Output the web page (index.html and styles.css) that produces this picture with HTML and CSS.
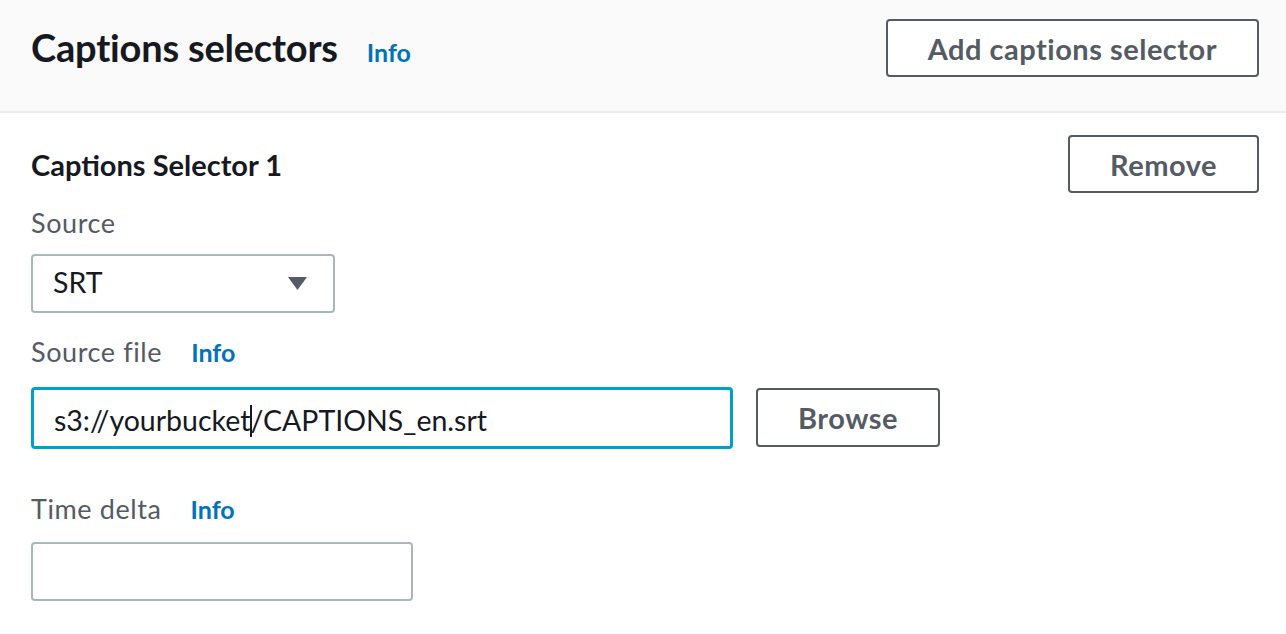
FILE: index.html
```html
<!DOCTYPE html>
<html lang="en">
<head>
<meta charset="utf-8">
<title>Captions selectors</title>
<link rel="stylesheet" href="styles.css">
</head>
<body>
<div class="panel">
  <header class="panel-header">
    <div class="title-group">
      <h2 class="panel-title">Captions selectors</h2>
      <a class="info-link" href="#">Info</a>
    </div>
    <button class="btn" type="button">Add captions selector</button>
  </header>

  <section class="selector">
    <div class="selector-head">
      <h3 class="selector-title">Captions Selector 1</h3>
      <button class="btn" type="button">Remove</button>
    </div>

    <div class="field field-source">
      <div class="label-row"><span class="label">Source</span></div>
      <div class="select">
        <span class="select-value">SRT</span>
        <svg class="select-arrow" width="19" height="13" viewBox="0 0 19 13" aria-hidden="true"><polygon points="0,0 19,0 9.5,13" fill="#545b64"/></svg>
      </div>
    </div>

    <div class="field field-file">
      <div class="label-row"><span class="label">Source file</span><a class="info-link" href="#">Info</a></div>
      <div class="input-row">
        <div class="text-input focused">s3://yourbucket<span class="text-caret"></span>/CAPTIONS_en.srt</div>
        <button class="btn btn-browse" type="button">Browse</button>
      </div>
    </div>

    <div class="field field-delta">
      <div class="label-row"><span class="label">Time delta</span><a class="info-link" href="#">Info</a></div>
      <div class="text-input small"></div>
    </div>
  </section>
</div>
</body>
</html>
```

FILE: styles.css
```css
* { box-sizing: border-box; }

body {
  margin: 0;
  background: #ffffff;
  font-family: Lato, "Open Sans", "Liberation Sans", sans-serif;
  color: #16191f;
}

.panel-header {
  height: 113px;
  background: #fafafa;
  border-bottom: 2px solid #eaeded;
  padding: 19px 27px 0 31px;
  display: flex;
  justify-content: space-between;
  align-items: flex-start;
}

.title-group {
  display: flex;
  align-items: baseline;
  gap: 29px;
  margin-top: 5px;
}

.panel-title {
  margin: 0;
  font-size: 38px;
  line-height: 46px;
  font-weight: 700;
  letter-spacing: -0.2px;
  color: #16191f;
}

.info-link {
  font-size: 25px;
  font-weight: 700;
  color: #0073bb;
  text-decoration: none;
}

.btn {
  height: 58px;
  padding: 0 40px;
  border: 2px solid #545b64;
  border-radius: 4px;
  background: #ffffff;
  color: #545b64;
  font-family: Lato, "Open Sans", "Liberation Sans", sans-serif;
  font-size: 29px;
  font-weight: 700;
  letter-spacing: 0.5px;
  cursor: pointer;
}

.selector {
  padding: 22px 27px 0 31px;
}

.selector-head {
  display: flex;
  justify-content: space-between;
  align-items: center;
}

.selector-title {
  margin: 0;
  font-size: 29px;
  line-height: 35px;
  font-weight: 700;
  color: #16191f;
}

.label-row {
  height: 40px;
  display: flex;
  align-items: baseline;
  gap: 29px;
}

.label {
  font-size: 27px;
  line-height: 40px;
  letter-spacing: 0.6px;
  color: #545b64;
}

.field-source { margin-top: 10px; }
.field-source .select { margin-top: 11px; }

.select {
  width: 304px;
  height: 59px;
  border: 2px solid #aab7b8;
  border-radius: 4px;
  display: flex;
  align-items: center;
  justify-content: space-between;
  padding: 0 26px 4px 20px;
  font-size: 28.5px;
  color: #16191f;
}

.select-arrow { margin-top: 4px; }

.field-file { margin-top: 19px; }

.input-row {
  margin-top: 15px;
  display: flex;
  align-items: flex-start;
  gap: 23px;
}

.text-input {
  width: 702px;
  height: 62px;
  border: 2px solid #aab7b8;
  border-radius: 4px;
  padding: 4px 0 0 20px;
  display: flex;
  align-items: center;
  font-size: 28.5px;
  color: #16191f;
  white-space: nowrap;
}

.text-input.focused {
  border: 3px solid #00a1c9;
}

.text-caret {
  display: inline-block;
  width: 0;
  height: 32px;
  border-left: 2px solid #16191f;
  margin-right: -2px;
  align-self: center;
  margin-top: 2px;
}

.btn-browse { margin-top: 1px; height: 59px; }

.field-delta { margin-top: 40px; }

.text-input.small {
  width: 382px;
  height: 59px;
  margin-top: 13px;
}
```
